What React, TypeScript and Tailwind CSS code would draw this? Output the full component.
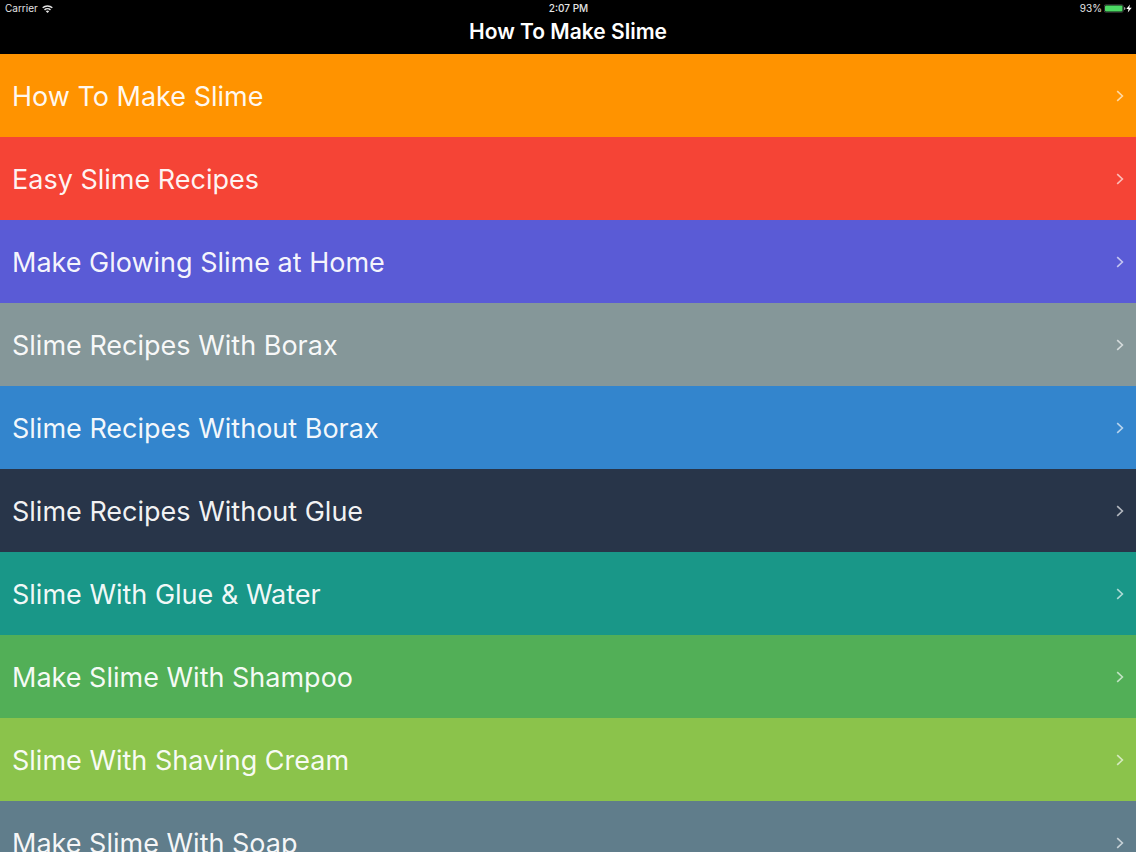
const recipes = [
  { title: 'How To Make Slime', color: 'bg-[#ff9300]' },
  { title: 'Easy Slime Recipes', color: 'bg-[#f54436]' },
  { title: 'Make Glowing Slime at Home', color: 'bg-[#5a5bd6]' },
  { title: 'Slime Recipes With Borax', color: 'bg-[#859799]' },
  { title: 'Slime Recipes Without Borax', color: 'bg-[#3385cd]' },
  { title: 'Slime Recipes Without Glue', color: 'bg-[#283549]' },
  { title: 'Slime With Glue & Water', color: 'bg-[#199788]' },
  { title: 'Make Slime With Shampoo', color: 'bg-[#52af57]' },
  { title: 'Slime With Shaving Cream', color: 'bg-[#8bc34b]' },
  { title: 'Make Slime With Soap', color: 'bg-[#607d8b]' },
]

function WifiIcon() {
  return (
    <svg viewBox="0 0 20 15" className="w-[11px] h-2" fill="none" stroke="currentColor" strokeWidth="2.8">
      <path d="M1 5.3a13 13 0 0 1 18 0" />
      <path d="M4.4 9.2a8 8 0 0 1 11.2 0" />
      <path d="M10 15l-3.2-3.3a4.6 4.6 0 0 1 6.4 0z" fill="currentColor" stroke="none" />
    </svg>
  )
}

function BatteryIcon() {
  return (
    <svg viewBox="0 0 56 18" className="w-7 h-[9px]">
      <rect x="0.5" y="1.5" width="38" height="15" rx="3" fill="none" stroke="#777" />
      <rect x="2" y="3" width="35" height="12" rx="2" fill="#4cd964" />
      <path d="M40.5 6c3 .8 3 5.2 0 6z" fill="#d0d0d0" />
      <path d="M52 1l-7.5 9h4.5l-1.5 7 8-9.5h-5z" fill="#fff" />
    </svg>
  )
}

function Chevron() {
  return (
    <svg viewBox="0 0 8 12" className="w-2 h-3 shrink-0 text-white/65" fill="none" stroke="currentColor" strokeWidth="1.6">
      <path d="M1.2 1.2L6.4 6l-5.2 4.8" />
    </svg>
  )
}

export default function App() {
  return (
    <div className="h-screen overflow-hidden bg-black text-white font-['Inter',sans-serif]">
      <header className="h-[54px]">
        {/* Status bar */}
        <div className="grid grid-cols-3 items-center h-[17px] pl-[5px] pr-1 text-[10px] leading-[17px] text-neutral-200">
          <div className="flex items-center gap-1">
            Carrier
            <WifiIcon />
          </div>
          <div className="text-center font-medium">2:07 PM</div>
          <div className="flex items-center justify-end gap-[2px]">
            93%
            <BatteryIcon />
          </div>
        </div>

        <h1 className="text-center text-[21px] leading-[30px] font-semibold">How To Make Slime</h1>
      </header>

      <nav aria-label="Recipes">
        <ul>
          {recipes.map((recipe) => (
            <li key={recipe.title}>
              <a
                href="#"
                className={`flex items-center justify-between h-[83px] px-3 text-[27px] leading-[44px] text-white/95 ${recipe.color}`}
              >
                <span className="pt-[2px]">{recipe.title}</span>
                <Chevron />
              </a>
            </li>
          ))}
        </ul>
      </nav>
    </div>
  )
}
